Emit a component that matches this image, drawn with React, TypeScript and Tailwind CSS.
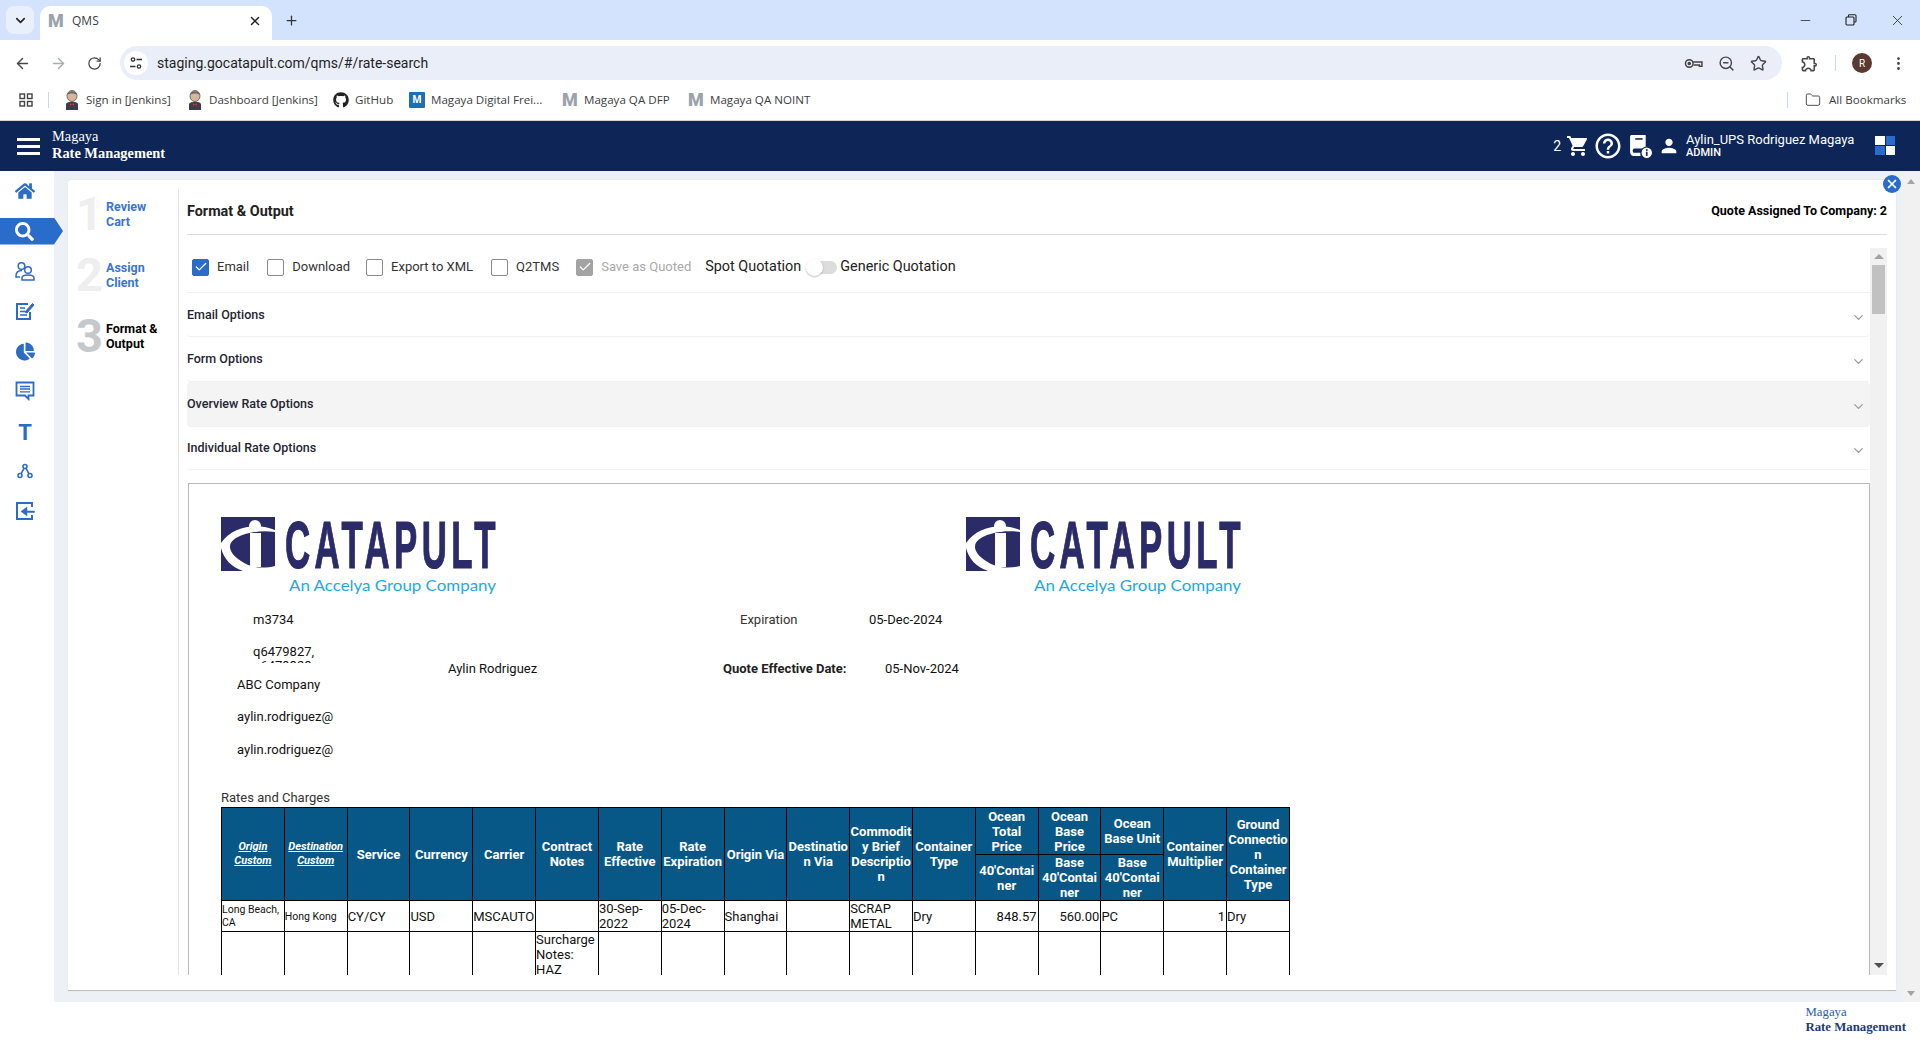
import React from "react";
import { ArrowLeft, ArrowRight, RotateCw, Star, ZoomOut, ChevronDown, X, Plus, Folder, EllipsisVertical, Minus, Check } from "lucide-react";
import { FaHome, FaSearch, FaChartPie, FaGithub } from "react-icons/fa";
import { MdShoppingCart, MdHelpOutline, MdPerson, MdOutlineExtension } from "react-icons/md";

const Jenkins = () => (
  <svg width="16" height="20" viewBox="0 0 16 20">
    <ellipse cx="8" cy="6" rx="5" ry="5.5" fill="#d8b49a" stroke="#555" strokeWidth="0.8" />
    <path d="M3 5 C4 0 12 0 13 5 C10 3 6 3 3 5Z" fill="#6b6b6b" />
    <path d="M2 20 V14 C3 11 13 11 14 14 V20Z" fill="#3d3d4a" />
    <path d="M6 13 L8 14.5 L10 13 V16 L8 14.5 L6 16Z" fill="#c33" />
  </svg>
);

const MFav = ({ c = "#9aa3ad" }: { c?: string }) => (
  <span className="w-4 text-center font-black text-[18px] leading-none" style={{ color: c, fontFamily: "Roboto" }}>M</span>
);

const Bm = ({ icon, text, w }: { icon: React.ReactNode; text: string; w: number }) => (
  <div className="flex items-center gap-[6px] shrink-0" style={{ width: w }}>
    <span className="w-4 flex justify-center">{icon}</span>
    <span className="text-[11.6px] text-[#3c4043] whitespace-nowrap">{text}</span>
  </div>
);

const Logo = ({ gap = 10, subW = 207 }: { gap?: number; subW?: number }) => (
  <svg width="277" height="80" viewBox="0 0 277 80" className="shrink-0">
    <rect x="0" y="0" width="54" height="54" fill="#2a2b68" />
    <path d="M54 13 C38 6 12 8 0 26 V31 C3 42 10 50 22 54 H54 V49 C42 52 30 51 20 44 C8 36 5 27 15 21 C25 15 40 13 54 15Z" fill="#fff" />
    <circle cx="34" cy="9" r="6" fill="#fff" />
    <rect x="29" y="16" width="11" height="34" fill="#fff" />
    <text
      transform={`translate(${54 + gap} 51) scale(0.52 1)`}
      fontFamily="Liberation Sans"
      fontWeight="700"
      fontSize="67"
      fill="#2a2b68"
      stroke="#2a2b68"
      strokeWidth="1.2"
      textLength={405}
      lengthAdjust="spacing"
    >
      CATAPULT
    </text>
    <text x={275 - subW} y="74" fontFamily="Lato" fontSize="16" fill="#1baae6" textLength={subW} lengthAdjust="spacingAndGlyphs">An Accelya Group Company</text>
  </svg>
);

const CheckRow = ({ label, checked, disabled }: { label: string; checked?: boolean; disabled?: boolean }) => (
  <label className="flex items-center gap-2 shrink-0">
    <span
      className={`w-[17px] h-[17px] rounded-[2px] flex items-center justify-center border ${
        checked ? (disabled ? "bg-[#a3a3a3] border-[#a3a3a3]" : "bg-[#2a6cc9] border-[#2a6cc9]") : "bg-white border-[#8a8a8a]"
      }`}
    >
      {checked && <Check size={14} strokeWidth={2.2} className="text-white" />}
    </span>
    <span className={`text-[13px] ${disabled ? "text-[#a9a9a9]" : "text-[#333]"}`}>{label}</span>
  </label>
);

const Accordion = ({ label, h, active }: { label: string; h: string; active?: boolean }) => (
  <div className={`${h} flex items-center justify-between pr-[4px] border-b border-[#f1f1f1] rounded-[4px] ${active ? "bg-[#f4f4f4]" : ""}`}>
    <span className="text-[12.5px] font-medium text-[#1f2533]">{label}</span>
    <ChevronDown size={15} className="text-[#9a9a9a] mt-[4px]" />
  </div>
);

const Step = ({ n, a, b, active, h }: { n: string; a: string; b: string; active?: boolean; h: string }) => (
  <div className={`flex ${h}`}>
    <span className={`w-[38px] pl-[8px] text-[47px] font-bold leading-[34px] ${active ? "text-[#c6c9cc]" : "text-[#eeeeee]"}`}>{n}</span>
    <div className={`text-[12.5px] font-bold leading-[15px] pt-[2px] ${active ? "text-black" : "text-[#3a76cf]"}`}>
      <div>{a}</div>
      <div>{b}</div>
    </div>
  </div>
);

const SideIcon = ({ children }: { children: React.ReactNode }) => (
  <div className="h-[40px] w-[50px] flex items-center justify-center text-[#2b6cc4]">{children}</div>
);

const Th = ({ children, rs, small }: { children: React.ReactNode; rs?: number; small?: boolean }) => (
  <th
    rowSpan={rs}
    className={`border border-black bg-[#085887] text-white text-center p-0 ${
      small ? "text-[11px] italic underline font-bold leading-[14px]" : "text-[13px] font-bold leading-[15px]"
    } [overflow-wrap:anywhere]`}
  >
    {children}
  </th>
);

const Td = ({ children, right, small, top }: { children?: React.ReactNode; right?: boolean; small?: boolean; top?: boolean }) => (
  <td className={`border border-black pl-0 pr-[1px] py-0 ${top ? "align-top" : "align-middle"} ${right ? "text-right" : "text-left"} ${small ? "text-[10.5px] leading-[13px]" : "text-[13px] leading-[15px]"} text-[#111]`}>
    {children}
  </td>
);

export default function App() {
  return (
    <div className="w-[1920px] h-[1040px] overflow-hidden flex flex-col bg-white" style={{ fontFamily: "Roboto, sans-serif" }}>
      {/* Tab strip */}
      <div className="h-[40px] bg-[#d3e3fd] flex items-end shrink-0 relative" style={{ fontFamily: "'Open Sans', sans-serif" }}>
        <div className="ml-[6px] mb-[6px] w-[28px] h-[28px] rounded-[8px] bg-[#e9f0fc] flex items-center justify-center">
          <ChevronDown size={15} strokeWidth={2.5} className="text-[#1f1f1f]" />
        </div>
        <div className="ml-[6px] w-[232px] h-[34px] bg-white rounded-t-[10px] flex items-center pl-[8px] pr-[10px] pb-[5px]">
          <MFav />
          <span className="ml-[8px] text-[12px] text-[#3c4043]">QMS</span>
          <X size={14} strokeWidth={2.5} className="ml-auto text-[#222]" />
        </div>
        <Plus size={15} className="ml-[12px] mb-[12px] text-[#333]" />
        <div className="ml-auto flex h-[40px] items-center text-[#222]">
          <div className="w-[46px] flex justify-center"><Minus size={15} strokeWidth={1.2} /></div>
          <div className="w-[46px] flex justify-center">
            <svg width="12" height="12" viewBox="0 0 12 12" fill="none" stroke="#222" strokeWidth="1.1"><rect x="1" y="3" width="8" height="8" rx="1" /><path d="M3.5 3V1.5a.8.8 0 0 1 .8-.8H10a1 1 0 0 1 1 1v5.5a.8.8 0 0 1-.8.8H9" /></svg>
          </div>
          <div className="w-[46px] flex justify-center"><X size={17} strokeWidth={1.1} /></div>
        </div>
      </div>

      {/* Toolbar */}
      <div className="h-[40px] bg-white rounded-t-[10px] flex items-end shrink-0 text-[#474747]">
        <div className="flex h-[34px] items-center">
          <ArrowLeft size={17} className="ml-[14px]" />
          <ArrowRight size={17} className="ml-[19px] text-[#a9adb3]" />
          <RotateCw size={15} className="ml-[20px]" />
        </div>
        <div className="ml-[18px] w-[1662px] h-[34px] bg-[#e9eef8] rounded-full flex items-center pl-[4px] pr-[15px]">
          <span className="w-[24px] h-[24px] rounded-full bg-white flex items-center justify-center">
            <svg width="14" height="14" viewBox="0 0 14 14" fill="none" stroke="#333" strokeWidth="1.3"><circle cx="4" cy="3.5" r="1.7" /><path d="M7.5 3.5H13M1 10.5H6.5" /><circle cx="10" cy="10.5" r="1.7" /></svg>
          </span>
          <span className="ml-[9px] text-[14px] text-[#1f1f1f]" style={{ fontFamily: "Roboto" }}>staging.gocatapult.com/qms/#/rate-search</span>
          <div className="ml-auto flex items-center gap-[15px]">
            <svg width="19" height="13" viewBox="0 0 18 12" fill="none" stroke="#444" strokeWidth="1.4"><circle cx="5" cy="6" r="3.6" /><circle cx="5" cy="6" r="1" fill="#444" /><path d="M8.6 4.5H17V8.5H14.5V7.5H9" /></svg>
            <ZoomOut size={17} />
            <Star size={17} />
          </div>
        </div>
        <div className="flex h-[34px] items-center">
          <MdOutlineExtension size={19} className="ml-[18px]" />
          <span className="ml-[16px] w-[1px] h-[16px] bg-[#c7d8f5]" />
          <span className="ml-[16px] w-[20px] h-[20px] rounded-full bg-[#5a3a30] text-white text-[10px] flex items-center justify-center">R</span>
          <EllipsisVertical size={17} className="ml-[18px]" />
        </div>
      </div>

      {/* Bookmarks */}
      <div className="h-[41px] bg-white border-b border-[#d4d4d4] flex items-center shrink-0 pl-[19px]" style={{ fontFamily: "'Open Sans', sans-serif" }}>
        <svg width="14" height="14" viewBox="0 0 14 14" fill="none" stroke="#444" strokeWidth="1.4"><rect x="1" y="1" width="4.5" height="4.5" /><rect x="8.5" y="1" width="4.5" height="4.5" /><rect x="1" y="8.5" width="4.5" height="4.5" /><rect x="8.5" y="8.5" width="4.5" height="4.5" /></svg>
        <span className="ml-[15px] w-[1px] h-[16px] bg-[#c7d8f5]" />
        <div className="ml-[15px] flex items-center">
          <Bm icon={<Jenkins />} text="Sign in [Jenkins]" w={123} />
          <Bm icon={<Jenkins />} text="Dashboard [Jenkins]" w={146} />
          <Bm icon={<FaGithub size={16} className="text-[#222]" />} text="GitHub" w={76} />
          <Bm icon={<span className="w-[16px] h-[16px] bg-[#1f6fb5] rounded-[1px] text-white text-[10px] font-bold flex items-center justify-center">M</span>} text="Magaya Digital Frei..." w={153} />
          <Bm icon={<MFav />} text="Magaya QA DFP" w={126} />
          <Bm icon={<MFav />} text="Magaya QA NOINT" w={130} />
        </div>
        <span className="ml-[969px] w-[1px] h-[16px] bg-[#c7d8f5]" />
        <Folder size={16} strokeWidth={1.4} className="ml-[17px] text-[#444]" />
        <span className="ml-[8px] text-[11.6px] text-[#3c4043] whitespace-nowrap">All Bookmarks</span>
      </div>

      {/* App header */}
      <div className="h-[50px] bg-[#0d2557] shrink-0 flex items-center text-white pl-[17px]">
        <div className="w-[23px] flex flex-col gap-[4px]">
          <span className="h-[3px] bg-white" />
          <span className="h-[3px] bg-white" />
          <span className="h-[3px] bg-white" />
        </div>
        <div className="ml-[12px] mb-[2px] text-[14.4px] leading-[17px]" style={{ fontFamily: "'Liberation Serif', serif" }}>
          <div>Magaya</div>
          <div className="font-bold">Rate Management</div>
        </div>
        <div className="ml-auto flex items-center">
          <span className="text-[14px]">2</span>
          <MdShoppingCart size={24} className="ml-[5px]" />
          <MdHelpOutline size={30} className="ml-[3px]" />
          <svg width="25" height="25" viewBox="0 0 24 24" className="ml-[5px]" fill="#fff">
            <path d="M3 1H17V14H6C5 14 4.5 15 4.5 16S5 18 6 18H12V21H5C3 21 2 19 2 17V3C2 2 2.5 1 3 1Z" />
            <rect x="7" y="4" width="7" height="1.5" fill="#0d2557" />
            <circle cx="18" cy="18" r="5.5" fill="#fff" stroke="#0d2557" strokeWidth="1" />
            <rect x="17.2" y="17" width="1.6" height="4" fill="#0d2557" />
            <rect x="17.2" y="14.6" width="1.6" height="1.6" fill="#0d2557" />
          </svg>
          <MdPerson size={22} className="ml-[5px]" />
          <div className="ml-[6px] w-[169px] leading-[13px] whitespace-nowrap mt-[-1px]">
            <div className="text-[13px]">Aylin_UPS Rodriguez Magaya</div>
            <div className="text-[11px] font-medium">ADMIN</div>
          </div>
          <div className="ml-[20px] mr-[25px] mb-[2px] grid grid-cols-2 gap-[1px] w-[20px]">
            <span className="h-[9px] bg-white" />
            <span className="h-[9px] bg-[#2a6cc9]" />
            <span className="h-[9px] bg-[#2a6cc9]" />
            <span className="h-[9px] bg-white" />
          </div>
        </div>
      </div>

      {/* Body */}
      <div className="flex-1 min-h-0 flex">
        {/* Sidebar */}
        <div className="w-[54px] bg-white shrink-0 flex flex-col relative z-10">
          <SideIcon><FaHome size={20} /></SideIcon>
          <div className="h-[40px] flex items-center">
            <div className="w-[63px] shrink-0 h-[27px] bg-[#2a6cc9] [clip-path:polygon(0_0,54px_0,100%_50%,54px_100%,0_100%)] pl-[15px] flex items-center text-white">
              <FaSearch size={19} />
            </div>
          </div>
          <SideIcon>
            <svg width="20" height="20" viewBox="0 0 20 20" fill="none" stroke="#2b6cc4" strokeWidth="1.5"><circle cx="6.5" cy="5" r="3.3" /><path d="M1 15C1 11 4 9.5 7 9.5" /><circle cx="13" cy="9" r="3.3" /><path d="M7 19V17C7 15 9.5 14 13 14S19 15 19 17V19Z" /><path d="M1 15V16H5" /></svg>
          </SideIcon>
          <SideIcon>
            <svg width="20" height="20" viewBox="0 0 20 20" fill="none" stroke="#2b6cc4" strokeWidth="2"><path d="M13 3H2V18H15V11" /><path d="M5 7H10M5 10.5H10M5 14H12" strokeWidth="1.5" /><path d="M10 11L17.5 2.5L19 4L12 12Z" fill="#2b6cc4" strokeWidth="1" /></svg>
          </SideIcon>
          <SideIcon><FaChartPie size={19} /></SideIcon>
          <SideIcon>
            <svg width="20" height="20" viewBox="0 0 20 20" fill="none" stroke="#2b6cc4" strokeWidth="1.8"><path d="M1.5 1.5H18.5V14.5H13.5V18L10 14.5H1.5Z" /><path d="M5 5.5H15M5 8H15M5 10.8H15" strokeWidth="1.3" /></svg>
          </SideIcon>
          <SideIcon><span className="text-[22px] font-bold leading-none mt-[3px]">T</span></SideIcon>
          <SideIcon>
            <svg width="16" height="16" viewBox="0 0 16 16" fill="none" stroke="#2b6cc4" strokeWidth="1.6"><circle cx="8" cy="3.5" r="2" /><circle cx="3" cy="12.5" r="2" /><circle cx="13" cy="12.5" r="2" /><path d="M7 5.3L4 10.8M9 5.3L12 10.8" /></svg>
          </SideIcon>
          <SideIcon>
            <svg width="20" height="20" viewBox="0 0 20 20" fill="none" stroke="#2b6cc4" strokeWidth="2"><path d="M17 6V2H2V18H17V14" /><path d="M19.5 10H12V6L6 10.5L12 15V11.5H19.5Z" fill="#2b6cc4" strokeWidth="0.5" /></svg>
          </SideIcon>
        </div>

        {/* Main area */}
        <div className="flex-1 min-w-0 bg-[#edf0f5] flex pl-[14px]">
          <div className="flex-1 min-w-0 pt-[9px] pb-[11px] mr-[6px]">
            <div className="relative h-full bg-white rounded-t-[3px] border-b border-[#bdbdbd] shadow-[0_0_2px_rgba(0,0,0,0.08)] flex pt-[9px] pb-[15px]">
              <span className="absolute -right-[5px] -top-[5px] w-[18px] h-[18px] rounded-full bg-[#2a6cc9] flex items-center justify-center z-10">
                <X size={14} strokeWidth={3} className="text-white" />
              </span>
              {/* Steps */}
              <div className="w-[111px] shrink-0 border-r border-[#e5e5e5] pt-[8px]">
                <Step n="1" a="Review" b="Cart" h="h-[61px]" />
                <Step n="2" a="Assign" b="Client" h="h-[61px]" />
                <Step n="3" a="Format &" b="Output" active h="h-[61px]" />
              </div>
              {/* Main */}
              <div className="flex-1 min-w-0 pl-[8px] pr-[9px] flex flex-col">
                <div className="h-[46px] shrink-0 border-b border-[#dedede] flex items-center justify-between">
                  <span className="text-[14.4px] font-bold text-[#222]">Format &amp; Output</span>
                  <span className="text-[12.5px] font-bold text-black">Quote Assigned To Company: 2</span>
                </div>
                <div className="flex-1 min-h-0 mt-[13px] flex">
                  <div className="flex-1 min-w-0 overflow-hidden">
                    <div className="h-[45px] flex items-center pl-[5px] pb-[6px] border-b border-[#f1f1f1]">
                      <CheckRow label="Email" checked />
                      <div className="ml-[18px]"><CheckRow label="Download" /></div>
                      <div className="ml-[16px]"><CheckRow label="Export to XML" /></div>
                      <div className="ml-[18px]"><CheckRow label="Q2TMS" /></div>
                      <div className="ml-[17px]"><CheckRow label="Save as Quoted" checked disabled /></div>
                      <span className="ml-[14px] -mt-[1px] text-[14.4px] text-[#222]">Spot Quotation</span>
                      <span className="relative ml-[8px] w-[28px] h-[13px] rounded-full bg-[#dcdcdc]">
                        <span className="absolute -left-[3px] -top-[2px] w-[17px] h-[17px] rounded-full bg-white shadow-[0_1px_2px_rgba(0,0,0,0.25)]" />
                      </span>
                      <span className="ml-[3px] -mt-[1px] text-[14.4px] text-[#222]">Generic Quotation</span>
                    </div>
                    <Accordion label="Email Options" h="h-[44px] pt-[2px]" />
                    <Accordion label="Form Options" h="h-[45px] pt-[1px]" />
                    <Accordion label="Overview Rate Options" h="h-[45px]" active />
                    <Accordion label="Individual Rate Options" h="h-[43px]" />

                    {/* Document */}
                    <div className="mt-[13px] ml-[1px] h-[600px] border border-[#bbbbbb] pl-[32px] pt-[33px] text-[13px] text-[#111]">
                      <div className="flex">
                        <Logo />
                        <div className="ml-[468px]"><Logo /></div>
                      </div>
                      <div className="flex mt-[5px]">
                        <div className="w-[227px] shrink-0 mt-[2px]">
                          <div className="h-[32px] pl-[32px] flex items-center">m3734</div>
                          <div className="ml-[32px] mt-[9px] w-[70px] h-[18px] overflow-hidden leading-[14px]">q6479827, q6479828</div>
                          <div className="mt-[6px] h-[32px] pl-[16px] flex items-center">ABC Company</div>
                          <div className="h-[32px] pl-[16px] flex items-center">aylin.rodriguez@</div>
                          <div className="h-[33px] pl-[16px] flex items-center">aylin.rodriguez@</div>
                        </div>
                        <div className="w-[275px] shrink-0 pt-[57px] leading-[20px]">Aylin Rodriguez</div>
                        <div className="pt-[2px]">
                          <div className="h-[32px] flex items-center text-[#333]">
                            <span className="ml-[17px] w-[129px]">Expiration</span>
                            <span className="text-[#111]">05-Dec-2024</span>
                          </div>
                          <div className="mt-[23px] flex leading-[20px]">
                            <span className="w-[162px] font-bold text-[#222]">Quote Effective Date:</span>
                            <span>05-Nov-2024</span>
                          </div>
                        </div>
                      </div>
                      <div className="mt-[23px] leading-[18px] text-[#333]">Rates and Charges</div>
                      <table className="table-fixed w-[1069px] border-collapse">
                        <thead>
                          <tr className="h-[47px]">
                            <Th rs={2} small>Origin Custom</Th>
                            <Th rs={2} small>Destination Custom</Th>
                            <Th rs={2}>Service</Th>
                            <Th rs={2}>Currency</Th>
                            <Th rs={2}>Carrier</Th>
                            <Th rs={2}>Contract Notes</Th>
                            <Th rs={2}>Rate Effective</Th>
                            <Th rs={2}>Rate Expiration</Th>
                            <Th rs={2}>Origin Via</Th>
                            <Th rs={2}>Destination Via</Th>
                            <Th rs={2}>Commodity Brief Description</Th>
                            <Th rs={2}>Container Type</Th>
                            <Th>Ocean Total Price</Th>
                            <Th>Ocean Base Price</Th>
                            <Th>Ocean Base Unit</Th>
                            <Th rs={2}>Container Multiplier</Th>
                            <Th rs={2}>Ground Connection Container Type</Th>
                          </tr>
                          <tr className="h-[46px]">
                            <Th>40'Container</Th>
                            <Th>Base 40'Container</Th>
                            <Th>Base 40'Container</Th>
                          </tr>
                        </thead>
                        <tbody>
                          <tr className="h-[30px]">
                            <Td small>Long Beach, CA</Td>
                            <Td small>Hong Kong</Td>
                            <Td>CY/CY</Td>
                            <Td>USD</Td>
                            <Td>MSCAUTO</Td>
                            <Td />
                            <Td>30-Sep-2022</Td>
                            <Td>05-Dec-2024</Td>
                            <Td>Shanghai</Td>
                            <Td />
                            <Td>SCRAP METAL</Td>
                            <Td>Dry</Td>
                            <Td right>848.57</Td>
                            <Td right>560.00</Td>
                            <Td>PC</Td>
                            <Td right>1</Td>
                            <Td>Dry</Td>
                          </tr>
                          <tr className="h-[80px]">
                            <Td /><Td /><Td /><Td /><Td />
                            <Td top>Surcharge Notes: HAZ</Td>
                            <Td /><Td /><Td /><Td /><Td /><Td /><Td /><Td /><Td /><Td /><Td />
                          </tr>
                        </tbody>
                      </table>
                    </div>
                  </div>
                  {/* Inner scrollbar */}
                  <div className="w-[17px] shrink-0 bg-[#f1f1f1] flex flex-col items-center pt-[6px]">
                    <span className="w-0 h-0 border-x-[5px] border-x-transparent border-b-[5px] border-b-[#a3a3a3]" />
                    <span className="mt-[6px] w-[13px] h-[49px] bg-[#c1c1c1]" />
                    <span className="mt-auto mb-[7px] w-0 h-0 border-x-[5px] border-x-transparent border-t-[5px] border-t-[#505050]" />
                  </div>
                </div>
              </div>
            </div>
          </div>
          {/* Page scrollbar */}
          <div className="w-[18px] shrink-0 bg-[#f1f1f1] flex flex-col items-center pt-[8px]">
            <span className="w-0 h-0 border-x-[4px] border-x-transparent border-b-[5px] border-b-[#a3a3a3]" />
            <span className="mt-auto mb-[6px] w-0 h-0 border-x-[4px] border-x-transparent border-t-[5px] border-t-[#a3a3a3]" />
          </div>
        </div>
      </div>

      {/* Footer */}
      <div className="h-[38px] bg-white shrink-0 flex justify-end pr-[14px] pt-[3px] text-[12.8px] leading-[15px]" style={{ fontFamily: "'Liberation Serif', serif" }}>
        <div>
          <div className="text-[#2c5ea8]">Magaya</div>
          <div className="font-bold text-[#1e3a7a]">Rate Management</div>
        </div>
      </div>
    </div>
  );
}
